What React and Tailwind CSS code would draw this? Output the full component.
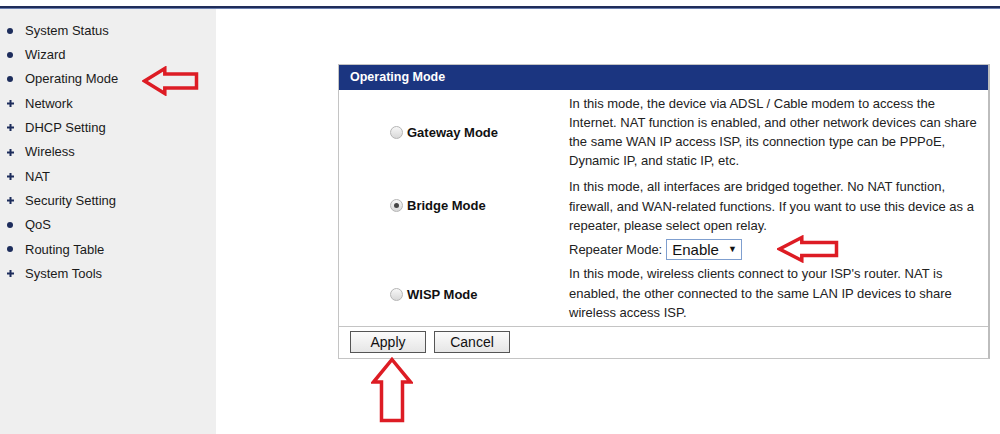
import React from "react";

const items = [
  ["dot", "System Status"],
  ["dot", "Wizard"],
  ["dot", "Operating Mode"],
  ["plus", "Network"],
  ["plus", "DHCP Setting"],
  ["plus", "Wireless"],
  ["plus", "NAT"],
  ["plus", "Security Setting"],
  ["dot", "QoS"],
  ["dot", "Routing Table"],
  ["plus", "System Tools"],
];

function Bullet({ type }) {
  if (type === "dot") {
    return <span className="block w-[6px] h-[6px] rounded-full bg-[#1d2d5c]" />;
  }
  return (
    <svg width="7" height="7" viewBox="0 0 7 7">
      <rect x="2.5" y="0" width="2" height="7" fill="#1d2d5c" />
      <rect x="0" y="2.5" width="7" height="2" fill="#1d2d5c" />
    </svg>
  );
}

function Radio({ checked }) {
  return (
    <span className="relative flex items-center justify-center w-[13px] h-[13px] rounded-full border border-[#b5b5b5] bg-gradient-to-b from-[#f7f7f7] to-[#d8d8d8]">
      {checked && <span className="block w-[5px] h-[5px] rounded-full bg-[#444]" />}
    </span>
  );
}

function LeftArrow({ className, w, h }) {
  return (
    <svg className={className} width={w} height={h} viewBox={`0 0 ${w} ${h}`}>
      <path
        d={`M2.5 ${h / 2} L${w * 0.4} 2.5 L${w * 0.4} ${h * 0.27} L${w - 2.5} ${h * 0.27} L${w - 2.5} ${h * 0.73} L${w * 0.4} ${h * 0.73} L${w * 0.4} ${h - 2.5} Z`}
        fill="none"
        stroke="#dd1c24"
        strokeWidth="3.5"
        strokeLinejoin="miter"
      />
    </svg>
  );
}

function UpArrow({ className, w, h }) {
  return (
    <svg className={className} width={w} height={h} viewBox={`0 0 ${w} ${h}`}>
      <path
        d={`M${w / 2} 2.5 L${w - 2.5} ${h * 0.38} L${w * 0.75} ${h * 0.38} L${w * 0.75} ${h - 2.5} L${w * 0.25} ${h - 2.5} L${w * 0.25} ${h * 0.38} L2.5 ${h * 0.38} Z`}
        fill="none"
        stroke="#dd1c24"
        strokeWidth="3.5"
      />
    </svg>
  );
}

export default function App() {
  const font = { fontFamily: '"Liberation Sans", Arial, sans-serif' };
  return (
    <div className="relative w-[1000px] h-[434px] bg-white flex flex-col overflow-hidden" style={font}>
      <div className="h-[6px] bg-white" />
      <div className="h-[3px] bg-[#1f2d5a] border-b border-[#6b7fae]" />
      <div className="flex flex-1">
        <div className="w-[216px] bg-[#efefef] pt-[9.5px]">
          {items.map(([t, label]) => (
            <div key={label} className="h-[24.3px] flex items-center text-[13px] text-[#1a1a1a]">
              <span className="w-[25px] flex justify-center pr-[5px]">
                <Bullet type={t} />
              </span>
              <span>{label}</span>
            </div>
          ))}
        </div>
        <div className="flex-1 pl-[122px] pt-[55px]">
          <div className="w-[652px] border border-[#c4c4c4] border-r-2 border-r-[#bdbdbd]">
            <div className="h-[25px] bg-[#1b3580] flex items-center pl-[11px] text-white font-bold text-[12.5px]">
              Operating Mode
            </div>
            <div className="flex text-[13px] text-[#222]">
              <div className="w-[225px] flex flex-col font-bold text-[13px] text-[#111]">
                <div className="h-[83px] flex items-center pl-[51px] gap-[4px] pt-[2px]">
                  <Radio />
                  <span>Gateway Mode</span>
                </div>
                <div className="h-[64.5px] flex items-center pl-[51px] gap-[4px]">
                  <Radio checked />
                  <span>Bridge Mode</span>
                </div>
                <div className="h-[26px]" />
                <div className="h-[61.5px] flex items-center pl-[51px] gap-[4px]">
                  <Radio />
                  <span>WISP Mode</span>
                </div>
              </div>
              <div className="w-[415px] pl-[5px] flex flex-col leading-[19.2px]">
                <div className="py-[3.5px]">
                  In this mode, the device via ADSL / Cable modem to access the Internet. NAT function is enabled, and other network devices can share the same WAN IP access ISP, its connection type can be PPPoE, Dynamic IP, and static IP, etc.
                </div>
                <div className="pt-[3.5px]">
                  In this mode, all interfaces are bridged together. No NAT function, firewall, and WAN-related functions. If you want to use this device as a repeater, please select open relay.
                </div>
                <div className="h-[29.5px] flex items-center gap-[4px]">
                  <span>Repeater Mode:</span>
                  <span className="h-[21px] w-[76px] border border-[#7f9fcf] bg-white flex items-center pl-[5px] text-[15px] text-[#111]">
                    Enable
                    <span className="ml-[9px] text-[9px]">▼</span>
                  </span>
                </div>
                <div className="pb-[3.5px]">
                  In this mode, wireless clients connect to your ISP's router. NAT is enabled, the other connected to the same LAN IP devices to share wireless access ISP.
                </div>
              </div>
            </div>
            <div className="border-t border-[#c4c4c4] h-[32px] flex items-center pl-[11px] gap-[8px]">
              <button className="w-[76px] h-[22px] border border-[#555] bg-gradient-to-b from-[#fbfbfb] to-[#e6e6e6] text-[14px] text-[#111]" style={font}>
                Apply
              </button>
              <button className="w-[76px] h-[22px] border border-[#555] bg-gradient-to-b from-[#fbfbfb] to-[#e6e6e6] text-[14px] text-[#111]" style={font}>
                Cancel
              </button>
            </div>
          </div>
        </div>
      </div>
      <LeftArrow className="absolute left-[142px] top-[66px]" w={57} h={30} />
      <LeftArrow className="absolute left-[777px] top-[235px]" w={62} h={28} />
      <UpArrow className="absolute left-[371px] top-[357px]" w={42} h={66} />
    </div>
  );
}
